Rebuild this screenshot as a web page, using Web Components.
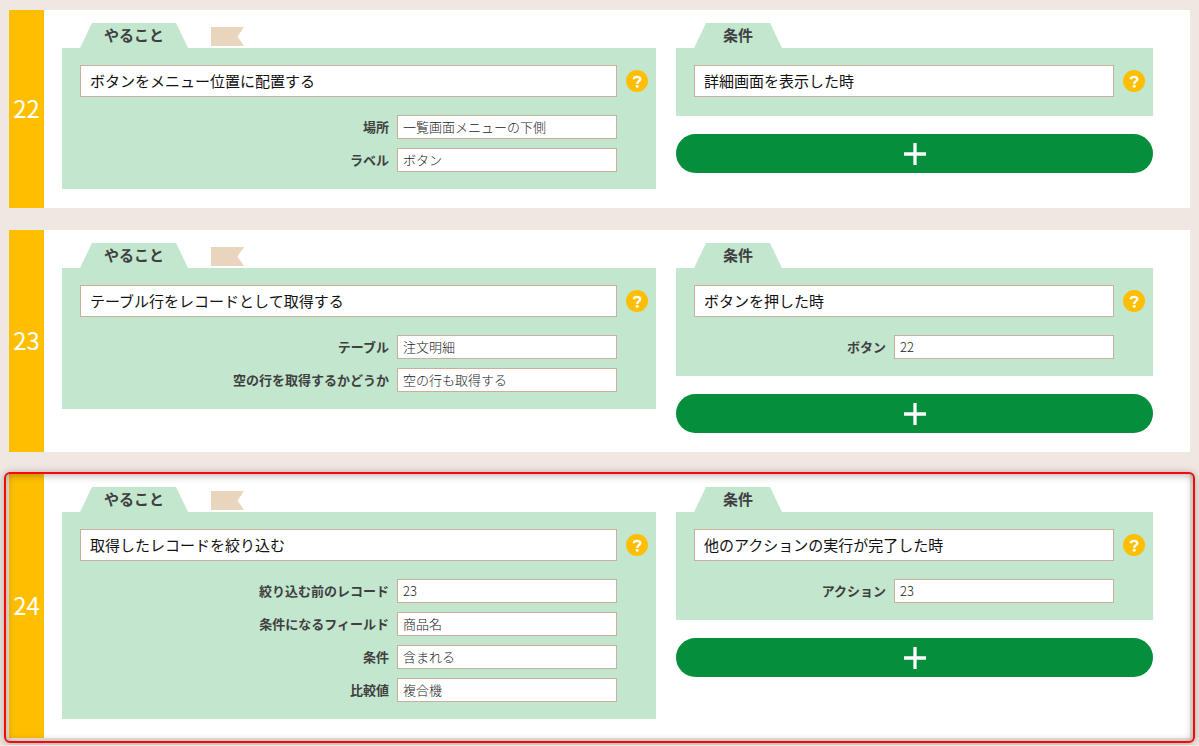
<!DOCTYPE html>
<html lang="ja">
<head>
<meta charset="utf-8">
<title>アクション設定</title>
<style>
  body {
    margin: 0;
    background: #efe7e1;
    color: #3f3f3f;
    font-family: "Noto Sans CJK JP", "Noto Sans", sans-serif;
    --accent: #ffbf00;
    --panel: #c3e6cf;
    --line: #c9b09c;
    --add: #058e3b;
  }
</style>
</head>
<body>
<template id="t-list">
  <style>
    :host { display: flex; flex-direction: column; gap: 22px; padding: 10px 9px 7px; }
  </style>
  <slot></slot>
</template>

<template id="t-card">
  <style>
    :host { display: flex; position: relative; background: #fff; }
    .number {
      flex: none; width: 35px; box-sizing: border-box; padding-bottom: 2px;
      display: flex; align-items: center; justify-content: center;
      background: var(--accent); color: #fff; font-size: 24px; line-height: 32px;
    }
    .content {
      flex: 1; display: grid; grid-template-columns: 594fr 477fr; gap: 20px;
      align-items: start; padding: 13px 37px 19px 18px;
    }
    .column { display: flex; flex-direction: column; gap: 18px; min-width: 0; }
    .frame { display: none; }
    :host([selected]) .frame {
      display: block; position: absolute; inset: -2px -5px -5px; box-sizing: border-box;
      border: 2px solid #f80808; border-radius: 6px; pointer-events: none;
      box-shadow: 0 1px 8px rgba(0,0,0,.28), inset 0 1px 9px rgba(0,0,0,.32);
    }
  </style>
  <div class="number"></div>
  <div class="content">
    <div class="column"><slot name="task"></slot></div>
    <div class="column"><slot name="condition"></slot><add-button></add-button></div>
  </div>
  <div class="frame"></div>
</template>

<template id="t-panel">
  <style>
    :host { display: block; }
    .head { display: flex; gap: 23px; height: 25px; padding-left: 18px; }
    h2 {
      margin: 0; box-sizing: border-box; min-width: 88px; padding: 0 24px; text-align: center;
      font-size: 15px; line-height: 24px; font-weight: 700; background: var(--panel);
      clip-path: polygon(12px 0, calc(100% - 12px) 0, 100% 100%, 0 100%);
    }
    .flag { display: none; width: 33px; height: 19px; margin-top: 4px; }
    :host([flag]) .flag { display: block; }
    .body {
      display: flex; flex-direction: column; gap: 18px;
      padding: 17px 8px 17px 18px; background: var(--panel);
    }
    .main { display: flex; align-items: center; gap: 9px; }
    input {
      flex: 1; min-width: 0; box-sizing: border-box; height: 32px; padding: 0 9px 2px;
      border: 1px solid var(--line); border-radius: 0; background: #fff; color: #111;
      font-family: inherit; font-size: 15px;
    }
    button {
      flex: none; width: 22px; height: 22px; padding: 0; border: 0; border-radius: 50%;
      background: none; cursor: pointer;
    }
    button svg { display: block; }
    .fields { display: flex; flex-direction: column; gap: 9px; padding-right: 31px; }
    :host([plain]) .fields { display: none; }
    :host([plain]) .body { padding-bottom: 19px; }
  </style>
  <div class="head">
    <h2></h2>
    <svg class="flag" viewBox="0 0 33 19" aria-hidden="true"><path d="M0 0H33L26.500 9.500L33 19H0Z" fill="#e9d5be"/></svg>
  </div>
  <div class="body">
    <div class="main">
      <input type="text">
      <button type="button" aria-label="ヘルプ">
        <svg width="22" height="22" viewBox="0 0 22 22"><circle cx="11" cy="11" r="11" fill="#ffbf00"/><path d="M7.800 9.200C7.900 7.500 9.200 6.900 11 6.900C12.900 6.900 14.200 7.700 14.200 9.200C14.200 11.200 11.200 11.200 11.200 13.900" fill="none" stroke="#fff" stroke-width="2.400"/><circle cx="11.200" cy="16.300" r="1.500" fill="#fff"/></svg>
      </button>
    </div>
    <div class="fields"><slot></slot></div>
  </div>
</template>

<template id="t-field">
  <style>
    :host { display: flex; align-items: center; justify-content: flex-end; gap: 8px; }
    label { font-size: 13px; line-height: 24px; font-weight: 700; }
    input {
      flex: none; width: 220px; box-sizing: border-box; height: 24px; padding: 0 5px 2px;
      border: 1px solid var(--line); border-radius: 0; background: #fff; color: #222;
      font-family: inherit; font-size: 13px; font-weight: 300;
    }
  </style>
  <label for="value"></label><input id="value" type="text">
</template>

<template id="t-add">
  <style>
    :host { display: block; }
    button {
      display: flex; align-items: center; justify-content: center; width: 100%; height: 39px;
      padding: 0; border: 0; border-radius: 20px; background: var(--add); cursor: pointer;
    }
  </style>
  <button type="button" aria-label="条件を追加">
    <svg width="22" height="22" viewBox="0 0 22 22"><path d="M11 0V22M0 11H22" stroke="#fff" stroke-width="3.300"/></svg>
  </button>
</template>

<action-list>
  <action-card number="22">
    <action-panel slot="task" heading="やること" value="ボタンをメニュー位置に配置する" flag>
      <action-field label="場所" value="一覧画面メニューの下側"></action-field>
      <action-field label="ラベル" value="ボタン"></action-field>
    </action-panel>
    <action-panel slot="condition" heading="条件" value="詳細画面を表示した時" plain></action-panel>
  </action-card>
  <action-card number="23">
    <action-panel slot="task" heading="やること" value="テーブル行をレコードとして取得する" flag>
      <action-field label="テーブル" value="注文明細"></action-field>
      <action-field label="空の行を取得するかどうか" value="空の行も取得する"></action-field>
    </action-panel>
    <action-panel slot="condition" heading="条件" value="ボタンを押した時">
      <action-field label="ボタン" value="22"></action-field>
    </action-panel>
  </action-card>
  <action-card number="24" selected>
    <action-panel slot="task" heading="やること" value="取得したレコードを絞り込む" flag>
      <action-field label="絞り込む前のレコード" value="23"></action-field>
      <action-field label="条件になるフィールド" value="商品名"></action-field>
      <action-field label="条件" value="含まれる"></action-field>
      <action-field label="比較値" value="複合機"></action-field>
    </action-panel>
    <action-panel slot="condition" heading="条件" value="他のアクションの実行が完了した時">
      <action-field label="アクション" value="23"></action-field>
    </action-panel>
  </action-card>
</action-list>

<script>
  class TemplateElement extends HTMLElement {
    constructor() {
      super();
      const template = document.getElementById(this.constructor.template);
      this.attachShadow({ mode: "open" }).append(template.content.cloneNode(true));
    }
    find(selector) { return this.shadowRoot.querySelector(selector); }
  }
  class ActionList extends TemplateElement { static template = "t-list"; }
  class AddButton extends TemplateElement { static template = "t-add"; }
  class ActionCard extends TemplateElement {
    static template = "t-card";
    connectedCallback() { this.find(".number").textContent = this.getAttribute("number"); }
  }
  class ActionPanel extends TemplateElement {
    static template = "t-panel";
    connectedCallback() {
      const heading = this.getAttribute("heading");
      this.find("h2").textContent = heading;
      this.find("input").value = this.getAttribute("value");
      this.find("input").setAttribute("aria-label", heading);
    }
  }
  class ActionField extends TemplateElement {
    static template = "t-field";
    connectedCallback() {
      this.find("label").textContent = this.getAttribute("label");
      this.find("input").value = this.getAttribute("value");
    }
  }
  customElements.define("add-button", AddButton);
  customElements.define("action-field", ActionField);
  customElements.define("action-panel", ActionPanel);
  customElements.define("action-card", ActionCard);
  customElements.define("action-list", ActionList);
</script>
</body>
</html>
